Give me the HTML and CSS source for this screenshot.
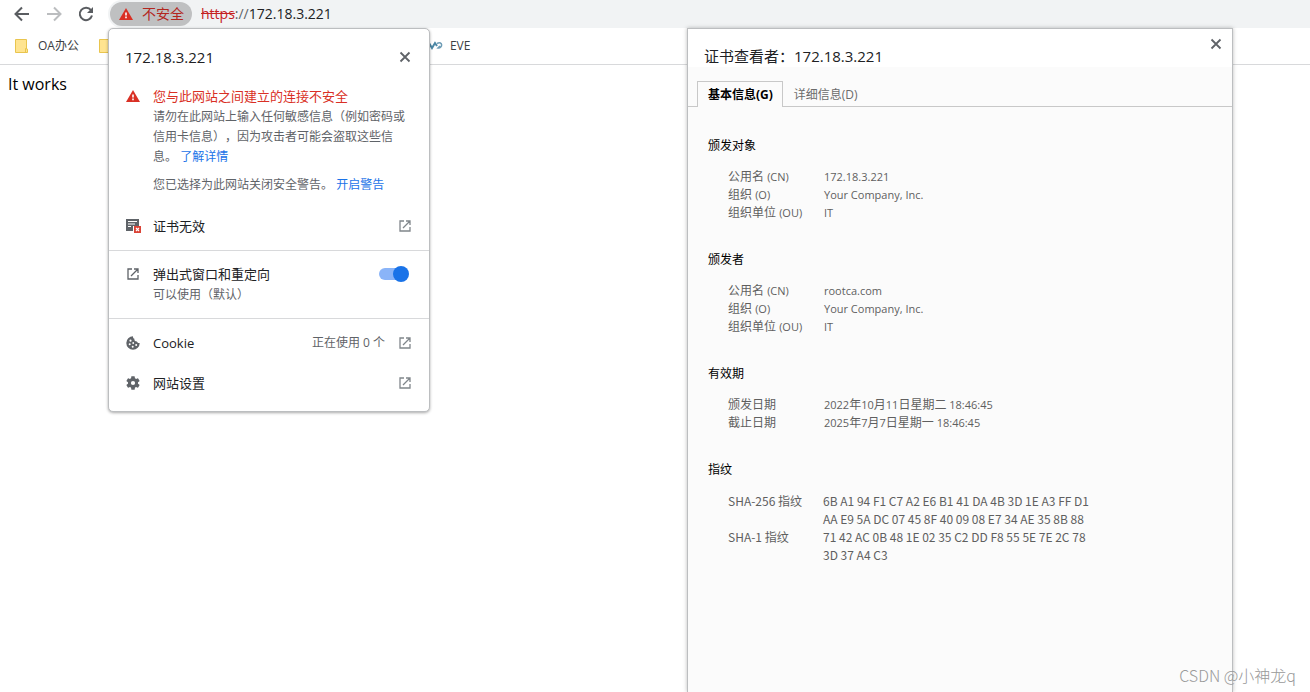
FILE: index.html
```html
<!DOCTYPE html>
<html lang="zh-CN">
<head>
<meta charset="utf-8">
<title>172.18.3.221</title>
<link rel="stylesheet" href="styles.css">
</head>
<body>
<svg class="defs" aria-hidden="true">
  <symbol id="launch" viewBox="0 0 12 12"><path d="M5 1H1v10h10V7M7 1h4v4M11 1 4 8" fill="none" stroke="currentColor" stroke-width="1.3"/></symbol>
  <symbol id="close" viewBox="0 0 12 12"><path d="m1.5 1.5 9 9m0-9-9 9" fill="none" stroke="currentColor" stroke-width="1.8"/></symbol>
  <symbol id="warn" viewBox="0 0 14 12"><path d="M7 0 14 12H0z" fill="#d93025"/><path d="M6.2 4.4h1.6v3.2H6.2zM6.2 8.6h1.6v1.6H6.2z" fill="#fff"/></symbol>
  <symbol id="folder" viewBox="0 0 13 14"><path d="M.5.5h11v9.6h1v3.4H.5z" fill="#ffe490" stroke="#e9c54e"/><path d="M10.5 13.500V9.500h1.500" fill="none" stroke="#e9c54e"/></symbol>
</svg>

<header class="toolbar">
  <nav class="nav">
    <button aria-label="后退"><svg width="16" height="16" viewBox="0 0 16 16"><path d="M15 8H2M8 1.500 1.500 8 8 14.500" fill="none" stroke="#5a5d61" stroke-width="2"/></svg></button>
    <button aria-label="前进"><svg width="16" height="16" viewBox="0 0 16 16"><path d="M1 8h13M8 1.500 14.500 8 8 14.500" fill="none" stroke="#bbbdbf" stroke-width="2"/></svg></button>
    <button aria-label="重新加载"><svg width="16" height="16" viewBox="0 0 16 16"><path d="M13 4.200A6.200 6.200 0 1 0 14 9.600" fill="none" stroke="#5a5d61" stroke-width="2"/><path d="M15 1v6H9z" fill="#5a5d61"/></svg></button>
  </nav>
  <div class="omnibox">
    <button class="chip"><svg width="14" height="12"><use href="#warn"/></svg>不安全</button>
    <div class="url"><s>https</s><span>://</span>172.18.3.221</div>
  </div>
</header>

<nav class="bookmarks">
  <a class="bookmark" href="#"><svg width="13" height="14"><use href="#folder"/></svg>OA办公</a>
  <a class="bookmark wide" href="#" aria-label="文件夹"><svg width="13" height="14"><use href="#folder"/></svg></a>
  <a class="bookmark" href="#"><svg width="18" height="10" viewBox="0 0 18 10"><path d="m1 6 3-4 3 5 3-5 2 3" fill="none" stroke="#4b87a5" stroke-width="2"/><path d="M12 2.500c6-3 6 5 1 4.500l2-2" fill="none" stroke="#6d9cb5" stroke-width="1.500"/></svg>EVE</a>
</nav>

<main class="page">It works</main>

<section class="popup" aria-label="网站信息">
  <div class="popup-head">
    <h1>172.18.3.221</h1>
    <button aria-label="关闭"><svg width="12" height="12"><use href="#close"/></svg></button>
  </div>
  <div class="status">
    <svg width="14" height="12"><use href="#warn"/></svg>
    <div>
      <h2>您与此网站之间建立的连接不安全</h2>
      <p>请勿在此网站上输入任何敏感信息（例如密码或信用卡信息），因为攻击者可能会盗取这些信息。 <a href="#">了解详情</a></p>
      <p>您已选择为此网站关闭安全警告。 <a href="#">开启警告</a></p>
    </div>
  </div>
  <button class="row cert-row">
    <svg width="16" height="16" viewBox="-1 0 16 16"><path d="M0 1h13v7H7v5H0z" fill="#5f6368"/><path d="M2 3.500h9M2 6h7M2 8.500h3" stroke="#fff" stroke-width="1"/><path d="M8 8h7v7H8z" fill="#db4437"/><path d="m10 10 3 3m0-3-3 3" stroke="#fff" stroke-width="1.100"/></svg>
    <span>证书无效</span>
    <svg class="end" width="12" height="12"><use href="#launch"/></svg>
  </button>
  <div class="permission">
    <svg width="12" height="12"><use href="#launch"/></svg>
    <label for="popups">弹出式窗口和重定向<small>可以使用（默认）</small></label>
    <input class="switch" type="checkbox" role="switch" id="popups" checked>
  </div>
  <div class="links">
    <button class="row">
      <svg width="14" height="14" viewBox="0 0 14 14"><path d="M7 .3A6.700 6.700 0 1 0 13.700 7c-1.300.4-2.400-.2-2.700-1.400C9.200 5.700 8 4.400 8.400 2.800 7.300 2.500 6.800 1.400 7 .3z" fill="#5f6368"/><g fill="#fff"><circle cx="4.500" cy="4.700" r="1.100"/><circle cx="3.700" cy="8.300" r="1"/><circle cx="7.200" cy="7" r=".9"/><circle cx="6.700" cy="10.700" r="1"/><circle cx="10.200" cy="9" r="1"/></g></svg>
      <span>Cookie</span>
      <span class="count">正在使用 0 个</span>
      <svg class="end" width="12" height="12"><use href="#launch"/></svg>
    </button>
    <button class="row">
      <svg width="14" height="14" viewBox="2 2 20 20"><path fill="#5f6368" d="M19.140 12.940c.04-.3.060-.61.060-.94 0-.32-.02-.64-.07-.94l2.030-1.580a.49.49 0 0 0 .12-.61l-1.920-3.320a.49.49 0 0 0-.59-.22l-2.390.96a7 7 0 0 0-1.620-.94l-.36-2.540a.48.48 0 0 0-.48-.41h-3.840c-.24 0-.43.17-.47.41l-.36 2.540c-.59.24-1.130.57-1.620.94l-2.390-.96a.48.48 0 0 0-.59.22L2.740 8.870a.47.47 0 0 0 .12.61l2.030 1.580c-.05.3-.09.63-.09.94s.02.64.07.94l-2.030 1.580a.49.49 0 0 0-.12.61l1.920 3.320c.12.22.37.29.59.22l2.390-.96c.5.38 1.030.7 1.620.94l.36 2.540c.05.24.24.41.48.41h3.840c.24 0 .44-.17.47-.41l.36-2.540a7 7 0 0 0 1.620-.94l2.390.96c.22.08.47 0 .59-.22l1.920-3.320a.47.47 0 0 0-.12-.61zM12 15a3 3 0 1 1 0-6 3 3 0 0 1 0 6z"/></svg>
      <span>网站设置</span>
      <svg class="end" width="12" height="12"><use href="#launch"/></svg>
    </button>
  </div>
</section>

<section class="viewer" aria-label="证书查看者">
  <div class="viewer-head">
    <h1>证书查看者：172.18.3.221</h1>
    <button aria-label="关闭"><svg width="12" height="12"><use href="#close"/></svg></button>
  </div>
  <div class="tabs" role="tablist">
    <button role="tab" aria-selected="true">基本信息(G)</button>
    <button role="tab" aria-selected="false">详细信息(D)</button>
  </div>
  <div class="details">
    <h2>颁发对象</h2>
    <dl>
      <dt>公用名 <span>(CN)</span></dt><dd>172.18.3.221</dd>
      <dt>组织 <span>(O)</span></dt><dd>Your Company, Inc.</dd>
      <dt>组织单位 <span>(OU)</span></dt><dd>IT</dd>
    </dl>
    <h2>颁发者</h2>
    <dl>
      <dt>公用名 <span>(CN)</span></dt><dd>rootca.com</dd>
      <dt>组织 <span>(O)</span></dt><dd>Your Company, Inc.</dd>
      <dt>组织单位 <span>(OU)</span></dt><dd>IT</dd>
    </dl>
    <h2>有效期</h2>
    <dl>
      <dt>颁发日期</dt><dd>2022<b>年</b>10<b>月</b>11<b>日星期二</b> 18:46:45</dd>
      <dt>截止日期</dt><dd>2025<b>年</b>7<b>月</b>7<b>日星期一</b> 18:46:45</dd>
    </dl>
    <h2>指纹</h2>
    <dl class="prints">
      <dt>SHA-256 指纹</dt><dd>6B A1 94 F1 C7 A2 E6 B1 41 DA 4B 3D 1E A3 FF D1<br>AA E9 5A DC 07 45 8F 40 09 08 E7 34 AE 35 8B 88</dd>
      <dt>SHA-1 指纹</dt><dd>71 42 AC 0B 48 1E 02 35 C2 DD F8 55 5E 7E 2C 78<br>3D 37 A4 C3</dd>
    </dl>
  </div>
</section>

<div class="watermark">CSDN @小神龙q</div>
</body>
</html>
```

FILE: styles.css
```css
* { box-sizing: border-box; }

body {
  margin: 0;
  min-height: 100vh;
  position: relative;
  overflow: hidden;
  background: #fff;
  color: #202124;
  font: 12px/20px "Open Sans", "Noto Sans CJK SC", sans-serif;
  text-spacing-trim: space-all;
}

h1, h2, p, dl, dd { margin: 0; font-weight: 400; }
a { color: #1a73e8; text-decoration: none; }
svg { display: block; flex: none; }
.defs { position: absolute; width: 0; height: 0; }

button {
  padding: 0;
  border: 0;
  background: none;
  color: inherit;
  font: inherit;
  text-align: left;
}

/* Browser toolbar */
.toolbar { display: flex; height: 28px; }
.nav { display: flex; align-items: center; gap: 16px; padding: 0 14px; }
.omnibox {
  flex: 1;
  display: flex;
  align-items: center;
  gap: 9px;
  padding-left: 2px;
  background: #f1f3f4;
  border-radius: 14px 0 0 14px;
}
.chip {
  display: flex;
  align-items: center;
  gap: 9px;
  height: 24px;
  padding: 0 8px 0 9px;
  border-radius: 12px;
  background: #bfc0c1;
  color: #b3261e;
  font-size: 14px;
}
.url { font-size: 14px; }
.url s { color: #c5221f; }
.url span { color: #5f6368; }

.bookmarks {
  display: flex;
  align-items: center;
  height: 37px;
  padding-left: 15px;
  border-bottom: 1px solid #d8d9db;
}
.bookmark { display: flex; align-items: center; gap: 10px; color: #3c4043; }
.bookmark.wide { width: 326px; margin-left: 20px; }
.bookmark:last-child { gap: 7px; }

.page { padding: 8px; color: #000; font-size: 16px; line-height: 22px; }

/* Site information popup */
.popup {
  position: absolute;
  top: 28px;
  left: 108px;
  width: 322px;
  border: 1px solid #bcbec0;
  border-radius: 5px;
  background: #fff;
  box-shadow: 0 1px 3px #0005;
}
.popup-head {
  display: flex;
  justify-content: space-between;
  align-items: center;
  padding: 18px 18px 18px 16px;
}
.popup h1 { font-size: 15px; }
.popup-head button, .viewer-head button, .end { color: #5f6368; }
.status {
  display: flex;
  gap: 13px;
  padding: 0 16px 0 17px;
  color: #5f6368;
}
.status > svg { margin-top: 5px; }
.status > div { width: 256px; }
.status h2 { color: #d93025; font-size: 13px; line-height: 22px; }
.status p + p { margin-top: 8px; }
.row {
  display: grid;
  grid-template-columns: 16px 1fr auto 12px;
  align-items: center;
  column-gap: 12px;
  width: 100%;
  height: 40px;
  padding: 0 18px 0 16px;
  font-size: 13px;
}
.row > svg:first-child { justify-self: center; }
.row .end { grid-column: 4; color: #80868b; }
.row .count { margin-right: 2px; color: #5f6368; font-size: 12px; }
.cert-row { margin: 11px 0 4px; }
.permission {
  display: grid;
  grid-template-columns: 16px 1fr 30px;
  column-gap: 12px;
  padding: 13px 20px 13px 16px;
  border: solid #d8d9db;
  border-width: 1px 0;
  font-size: 13px;
}
.permission > svg { margin: 4px 0 0 2px; color: #5f6368; }
.permission small { display: block; margin-top: 1px; color: #5f6368; font-size: 12px; }
.switch {
  appearance: none;
  width: 28px;
  height: 12px;
  margin: 4px 0;
  border-radius: 6px;
  background: #8ab4f8;
}
.switch::before {
  content: "";
  display: block;
  width: 16px;
  height: 16px;
  margin: -2px 0 0 14px;
  border-radius: 50%;
  background: #1a73e8;
}
.links { padding: 4px 0 8px; }

/* Certificate viewer window */
.viewer {
  position: absolute;
  top: 28px;
  bottom: 0;
  left: 687px;
  width: 546px;
  border: 1px solid #bcbec0;
  border-bottom: 0;
  background: #fbfbfb;
  box-shadow: 0 0 4px #0004;
}
.viewer-head {
  display: flex;
  justify-content: space-between;
  align-items: flex-start;
  height: 38px;
  padding: 9px 10px 0 16px;
  background: #fff;
}
.viewer-head h1 { padding-top: 8px; font-size: 15px; line-height: 20px; }
.tabs {
  display: flex;
  margin-top: 14px;
  padding-left: 9px;
  border-bottom: 1px solid #c8c8c8;
}
.tabs button {
  height: 25px;
  padding: 2px 11px 0;
  color: #6b6b6b;
}
.tabs button[aria-selected="true"] {
  height: 26px;
  margin-bottom: -1px;
  padding: 0 9px 0 10px;
  border: 1px solid #c8c8c8;
  border-bottom: 0;
  background: #fbfbfb;
  color: #000;
  font-weight: 700;
}
.details { padding: 30px 20px 0; color: #5f5f5f; line-height: 18px; }
.details h2 { color: #000; font-size: 12px; line-height: 18px; }
.details dl {
  display: grid;
  grid-template-columns: 96px 1fr;
  margin: 13px 0 29px 20px;
}
.details dd, .details dt span { font-size: 11px; }
.details b { font-size: 12px; font-weight: 400; }
.details .prints { grid-template-columns: 95px 1fr; }
.details .prints dt, .details .prints dd {
  font-family: "Noto Sans CJK SC", sans-serif;
  font-size: 12px;
}

.watermark {
  position: absolute;
  right: 14px;
  bottom: 6px;
  color: #999;
  font: 300 16px/22px "Noto Sans CJK SC", sans-serif;
}
```
